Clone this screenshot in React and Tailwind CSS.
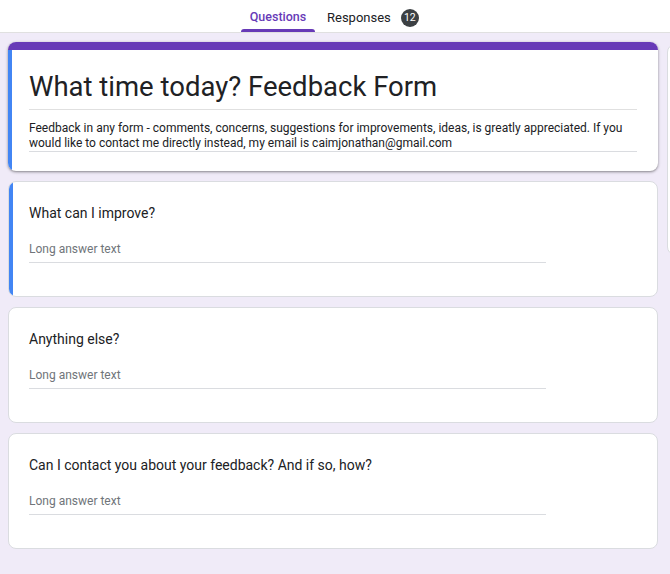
import React from "react";

function Question({ title, active }) {
    return (
        <div className="relative bg-white rounded-lg border border-[#dadce0] overflow-hidden h-[116px]">
            {active && <div className="absolute left-0 top-0 bottom-0 w-[4px] bg-[#4285f4]" />}
            <div className="pl-[20px] pr-6 pt-[21px]">
                <div className="text-[14px] text-[#202124] leading-[20px]">{title}</div>
                <div className="mt-[17px] w-[517px] border-b border-[#dadce0] pb-[4px] text-[12px] text-[#70757a] leading-[18px]">
                    Long answer text
                </div>
            </div>
        </div>
    );
}

export default function App() {
    return (
        <div className="w-[670px] h-[574px] overflow-hidden bg-[#f0ebf8] font-['Roboto',sans-serif] relative">
            <header className="bg-white h-[33px] flex items-end pl-[241px] border-b border-[#e0e0e0]">
                <div className="relative w-[74px] h-[32px] pt-[3px] flex items-center justify-center text-[12.5px] font-medium text-[#673ab7]">
                    Questions
                    <div className="absolute bottom-0 left-0 right-0 h-[3px] bg-[#673ab7] rounded-t-[3px]" />
                </div>
                <div className="ml-[12px] h-[32px] pt-[3px] flex items-center gap-[10px] text-[13px] text-[#202124]">
                    Responses
                    <span className="w-[18px] h-[18px] rounded-full bg-[#3c4043] text-white text-[10.5px] flex items-center justify-center">12</span>
                </div>
            </header>

            <div className="absolute left-[667px] top-[44px] w-[20px] h-[211px] bg-white rounded-lg border border-[#dadce0]" />

            <main className="w-[650px] ml-[8px] pt-[9px] flex flex-col gap-[10px]">
                <div className="relative bg-white rounded-lg overflow-hidden shadow-[0_1px_2px_rgba(0,0,0,0.3),0_1px_3px_1px_rgba(0,0,0,0.12)]">
                    <div className="h-[8px] bg-[#673ab7]" />
                    <div className="absolute left-0 top-[8px] bottom-0 w-[4px] bg-[#4285f4]" />
                    <div className="pl-[21px] pr-[21px] pt-[19px] pb-[19px]">
                        <h1 className="text-[27.5px] text-[#202124] leading-[36px] pb-[4px] border-b border-[#e0e0e0]">
                            What time today? Feedback Form
                        </h1>
                        <p className="mt-[11px] text-[12px] text-[#202124] leading-[15px] border-b border-[#dadce0]">
                            Feedback in any form - comments, concerns, suggestions for improvements, ideas, is greatly appreciated. If you would like to contact me directly instead, my email is caimjonathan@gmail.com
                        </p>
                    </div>
                </div>

                <Question title="What can I improve?" active />
                <Question title="Anything else?" />
                <Question title="Can I contact you about your feedback? And if so, how?" />
            </main>
        </div>
    );
}
